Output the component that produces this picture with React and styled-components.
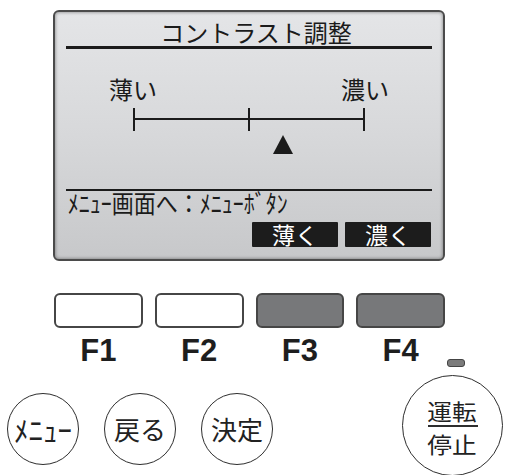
import React from 'react';
import styled, { createGlobalStyle } from 'styled-components';

const Global = createGlobalStyle`
  html, body { margin: 0; padding: 0; background: #fff; }
  body { font-family: "Noto Sans CJK JP", "Noto Sans", sans-serif; }
`;

const Device = styled.div`
  width: 506px;
  height: 475px;
  overflow: hidden;
  background: #fff;
  display: flex;
  flex-direction: column;
  padding-top: 10px;
  box-sizing: border-box;
`;

const Screen = styled.div`
  margin-left: 53px;
  width: 392px;
  height: 251px;
  box-sizing: border-box;
  border: 2px solid #4b4b4b;
  border-radius: 6px;
  background: linear-gradient(180deg, #e4e5e7 0%, #d7d8da 50%, #c7c8ca 100%);
  box-shadow: inset 0 0 3px 1px rgba(0, 0, 0, 0.28);
  padding: 8px 11px 12px;
  display: flex;
  flex-direction: column;
  color: #1b1b1b;
`;

const Title = styled.div`
  font-size: 24px;
  line-height: 24px;
  text-align: center;
  padding-left: 14px;
  white-space: nowrap;
`;

const Rule = styled.div`
  height: ${(p) => p.$thick}px;
  background: #1b1b1b;
  margin-top: ${(p) => p.$gap}px;
`;

const EndLabels = styled.div`
  width: 280px;
  margin: 28px auto 0;
  display: flex;
  justify-content: space-between;
  font-size: 24px;
  line-height: 24px;
`;

const ScaleBox = styled.div`
  width: 232px;
  margin: 7px auto 0;
  height: 23px;
  display: flex;
`;

const PointerRow = styled.div`
  width: 232px;
  margin: 4px auto 0;
  height: 19px;
  display: flex;
`;

const Pointer = styled.svg`
  margin-left: ${(p) => p.$pos}px;
  display: block;
`;

const Footer = styled.div`
  margin-top: 0px;
  padding-left: 2px;
  height: 23px;
  font-size: 25px;
  line-height: 23px;
  white-space: nowrap;
  transform: scaleX(0.88);
  transform-origin: left center;
`;

const SoftKeys = styled.div`
  margin-top: 8px;
  display: flex;
  justify-content: flex-end;
  gap: 7px;
  margin-right: 1px;
`;

const SoftKey = styled.div`
  width: 86px;
  height: 25px;
  background: #1c1c1c;
  color: #fff;
  font-size: 23px;
  line-height: 25px;
  text-align: center;
  border-radius: 1px;
`;

const Keys = styled.div`
  margin: 32px 0 0 54px;
  width: 391px;
  display: grid;
  grid-template-columns: repeat(4, 1fr);
  column-gap: 12px;
`;

const Key = styled.div`
  height: 35px;
  box-sizing: border-box;
  border: 2px solid #464646;
  border-radius: 6px;
  background: ${(p) => (p.$dark ? '#77787a' : '#fff')};
`;

const LabelRow = styled.div`
  margin-top: 7px;
  display: flex;
`;

const KeyLabels = styled.div`
  margin-left: 54px;
  width: 391px;
  display: grid;
  grid-template-columns: repeat(4, 1fr);
  column-gap: 12px;
`;

const KeyLabel = styled.div`
  font-family: "Liberation Sans", Arial, sans-serif;
  font-weight: 700;
  font-size: 31px;
  line-height: 31px;
  text-align: center;
  color: #1e1e1e;
`;

const Led = styled.div`
  width: 18px;
  height: 8px;
  box-sizing: border-box;
  margin-left: 2px;
  align-self: flex-end;
  margin-bottom: -1px;
  border: 1.5px solid #444;
  border-radius: 3px;
  background: #7b7b7b;
`;

const Controls = styled.div`
  margin-top: 9px;
  display: flex;
  justify-content: space-between;
  align-items: flex-start;
  padding: 0 3px 0 7px;
`;

const SmallButtons = styled.div`
  margin-top: 18px;
  display: flex;
  gap: 25px;
`;

const RoundButton = styled.div`
  width: 72px;
  height: 72px;
  box-sizing: border-box;
  border: 1.5px solid #2e2e2e;
  border-radius: 50%;
  display: flex;
  align-items: center;
  justify-content: center;
  font-size: ${(p) => p.$size || 26}px;
  line-height: 1;
  color: #222;
  white-space: nowrap;
`;

const PowerButton = styled.div`
  width: 101px;
  height: 101px;
  flex: none;
  box-sizing: border-box;
  border: 1.5px solid #2e2e2e;
  border-radius: 50%;
  display: flex;
  flex-direction: column;
  align-items: center;
  padding-top: 23px;
  color: #222;
`;

const PowerText = styled.div`
  font-size: 22px;
  line-height: 22px;
  transform: scaleX(1.12);
  margin-top: ${(p) => p.$gap || 0}px;
`;

const PowerDivider = styled.div`
  width: 50px;
  height: 1.5px;
  background: #2e2e2e;
  margin-top: 4px;
`;

export default function App() {
  return (
    <>
      <Global />
      <Device>
        <Screen>
          <Title>コントラスト調整</Title>
          <Rule $thick={3} $gap={2} />
          <EndLabels>
            <span>薄い</span>
            <span>濃い</span>
          </EndLabels>
          <ScaleBox>
            <svg width="232" height="23" viewBox="0 0 232 23">
              <g stroke="#1b1b1b" strokeWidth="2">
                <line x1="1" y1="0" x2="1" y2="23" />
                <line x1="116" y1="0" x2="116" y2="23" />
                <line x1="231" y1="0" x2="231" y2="23" />
                <line x1="1" y1="11" x2="231" y2="11" />
              </g>
            </svg>
          </ScaleBox>
          <PointerRow>
            <Pointer $pos={140} width="20" height="19" viewBox="0 0 20 19">
              <polygon points="10,0 20,19 0,19" fill="#1b1b1b" />
            </Pointer>
          </PointerRow>
          <Rule $thick={2} $gap={35} />
          <Footer>ﾒﾆｭｰ画面へ：ﾒﾆｭｰﾎﾞﾀﾝ</Footer>
          <SoftKeys>
            <SoftKey>薄く</SoftKey>
            <SoftKey>濃く</SoftKey>
          </SoftKeys>
        </Screen>

        <Keys>
          <Key />
          <Key />
          <Key $dark />
          <Key $dark />
        </Keys>
        <LabelRow>
          <KeyLabels>
            <KeyLabel>F1</KeyLabel>
            <KeyLabel>F2</KeyLabel>
            <KeyLabel>F3</KeyLabel>
            <KeyLabel>F4</KeyLabel>
          </KeyLabels>
          <Led />
        </LabelRow>

        <Controls>
          <SmallButtons>
            <RoundButton $size={29}>ﾒﾆｭｰ</RoundButton>
            <RoundButton>戻る</RoundButton>
            <RoundButton>決定</RoundButton>
          </SmallButtons>
          <PowerButton>
            <PowerText>運転</PowerText>
            <PowerDivider />
            <PowerText $gap={5}>停止</PowerText>
          </PowerButton>
        </Controls>
      </Device>
    </>
  );
}
